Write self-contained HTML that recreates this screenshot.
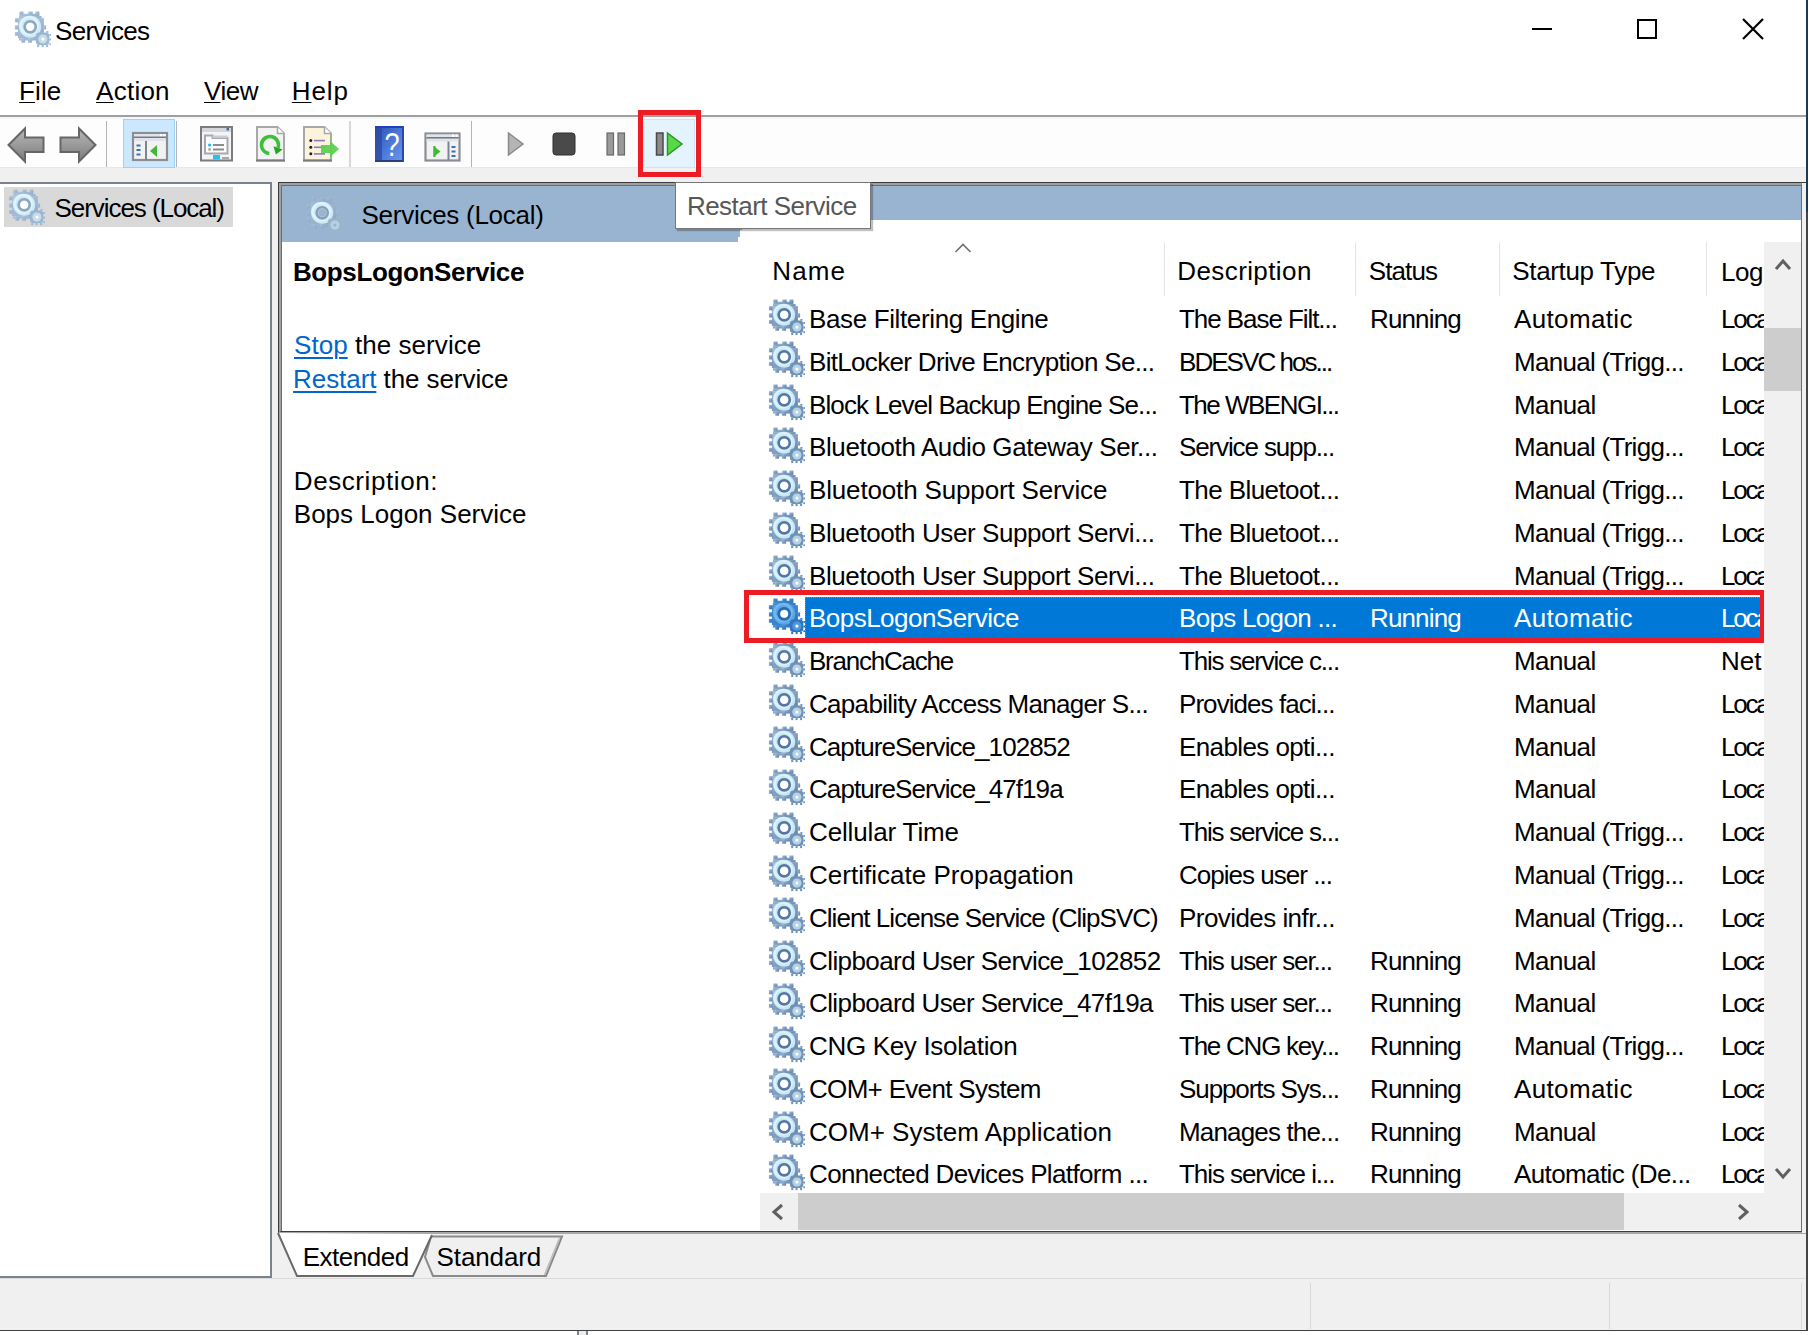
<!DOCTYPE html>
<html><head><meta charset="utf-8">
<style>
*{box-sizing:border-box;margin:0;padding:0}
html,body{width:1809px;height:1335px;overflow:hidden;background:#fff}
body{position:relative;font-family:"Liberation Sans",sans-serif;font-size:26px;letter-spacing:-0.45px;color:#000}
.a{position:absolute}
.t{position:absolute;white-space:nowrap;line-height:30px}
u{text-decoration-thickness:1px;text-underline-offset:2px}
svg.g{position:absolute}
.row{position:absolute;left:759px;width:1005px;height:42.77px}
.row .c{position:absolute;top:0;line-height:42.77px;white-space:nowrap}
.row.sel .c{color:#fff}
.lnk{color:#0066cc;text-decoration:underline;text-decoration-thickness:1.6px;text-underline-offset:3px}
.selbg{position:absolute;left:46px;top:-0.5px;width:959px;height:42px;background:#0078d7;border:1px dotted #a08060}
</style></head><body>
<svg width="0" height="0" style="position:absolute">
<defs>
<radialGradient id="rg" cx="0.45" cy="0.45" r="0.6"><stop offset="0" stop-color="#e8f6fc"/><stop offset="0.6" stop-color="#bfe0f0"/><stop offset="1" stop-color="#7f9fc2"/></radialGradient>
<radialGradient id="rs" cx="0.45" cy="0.45" r="0.6"><stop offset="0" stop-color="#d0e6f2"/><stop offset="1" stop-color="#7d9cc0"/></radialGradient>
<symbol id="gear" viewBox="0 0 37 37"><g opacity="1">
<linearGradient id="gear_t" x1="0" y1="0" x2="1" y2="1"><stop offset="0" stop-color="#a4c0dc"/><stop offset="1" stop-color="#5f7ea6"/></linearGradient>
<g fill="url(#gear_t)"><rect x="5.40" y="2.70" width="20" height="2.6"/><rect x="5.40" y="0.50" width="4.1" height="3"/><rect x="14.30" y="0.50" width="4.4" height="3"/><rect x="21.30" y="0.50" width="4.1" height="3"/><rect x="4.90" y="5.00" width="22.7" height="2.6"/><rect x="3.90" y="7.20" width="26" height="19.8"/><rect x="0.90" y="7.20" width="3.5" height="4.1"/><rect x="0.90" y="14.30" width="3.5" height="4.2"/><rect x="0.90" y="20.90" width="3.5" height="3.8"/><rect x="29.90" y="14.30" width="2.2" height="4.2"/><rect x="4.90" y="26.90" width="18" height="2.6"/><rect x="7.30" y="26.90" width="3.8" height="4.8"/><rect x="13.90" y="26.90" width="4.2" height="4.8"/></g>
<circle cx="16.2" cy="15.8" r="11" fill="#c6e7f5"/>
<circle cx="15.0" cy="14.600000000000001" r="8.6" fill="none" stroke="#e4f6fc" stroke-width="2.6" opacity="0.7"/>
<circle cx="16.2" cy="15.8" r="5.6" fill="none" stroke="#5676a4" stroke-width="2.6"/>
<circle cx="16.2" cy="15.8" r="3.9" fill="#fff"/>
<g fill="#7092b8"><rect x="21.90" y="21.50" width="13.4" height="12.6" rx="3.5"/><rect x="35.30" y="23.10" width="1.8" height="1.8"/><rect x="35.30" y="27.50" width="1.8" height="2"/><rect x="35.30" y="32.30" width="1.8" height="1.8"/><rect x="23.20" y="33.90" width="2" height="2.2"/><rect x="27.60" y="33.90" width="2" height="2.2"/><rect x="32.10" y="33.90" width="2" height="2.2"/><rect x="32.40" y="20.00" width="2" height="1.8"/></g>
<circle cx="28.9" cy="28.1" r="4.6" fill="#b4d2e4"/>
<circle cx="28.9" cy="28.1" r="1.6" fill="#fff"/>
</g></symbol><symbol id="gsel" viewBox="0 0 37 37"><g opacity="1">
<linearGradient id="gsel_t" x1="0" y1="0" x2="1" y2="1"><stop offset="0" stop-color="#4d9be0"/><stop offset="1" stop-color="#2a6cb8"/></linearGradient>
<g fill="url(#gsel_t)"><rect x="5.40" y="2.70" width="20" height="2.6"/><rect x="5.40" y="0.50" width="4.1" height="3"/><rect x="14.30" y="0.50" width="4.4" height="3"/><rect x="21.30" y="0.50" width="4.1" height="3"/><rect x="4.90" y="5.00" width="22.7" height="2.6"/><rect x="3.90" y="7.20" width="26" height="19.8"/><rect x="0.90" y="7.20" width="3.5" height="4.1"/><rect x="0.90" y="14.30" width="3.5" height="4.2"/><rect x="0.90" y="20.90" width="3.5" height="3.8"/><rect x="29.90" y="14.30" width="2.2" height="4.2"/><rect x="4.90" y="26.90" width="18" height="2.6"/><rect x="7.30" y="26.90" width="3.8" height="4.8"/><rect x="13.90" y="26.90" width="4.2" height="4.8"/></g>
<circle cx="16.2" cy="15.8" r="11" fill="#5aa6e6"/>
<circle cx="15.0" cy="14.600000000000001" r="8.6" fill="none" stroke="#7cc0f0" stroke-width="2.6" opacity="0.7"/>
<circle cx="16.2" cy="15.8" r="5.6" fill="none" stroke="#2a6ab4" stroke-width="2.6"/>
<circle cx="16.2" cy="15.8" r="3.9" fill="#fff"/>
<g fill="#2f74c0"><rect x="21.90" y="21.50" width="13.4" height="12.6" rx="3.5"/><rect x="35.30" y="23.10" width="1.8" height="1.8"/><rect x="35.30" y="27.50" width="1.8" height="2"/><rect x="35.30" y="32.30" width="1.8" height="1.8"/><rect x="23.20" y="33.90" width="2" height="2.2"/><rect x="27.60" y="33.90" width="2" height="2.2"/><rect x="32.10" y="33.90" width="2" height="2.2"/><rect x="32.40" y="20.00" width="2" height="1.8"/></g>
<circle cx="28.9" cy="28.1" r="4.6" fill="#4f98dc"/>
<circle cx="28.9" cy="28.1" r="1.6" fill="#fff"/>
</g></symbol><symbol id="ghdr" viewBox="0 0 37 37"><g opacity="1">
<linearGradient id="ghdr_t" x1="0" y1="0" x2="1" y2="1"><stop offset="0" stop-color="#a8c0d8"/><stop offset="1" stop-color="#8aa6c4"/></linearGradient>
<g fill="url(#ghdr_t)"><rect x="5.40" y="2.70" width="20" height="2.6"/><rect x="5.40" y="0.50" width="4.1" height="3"/><rect x="14.30" y="0.50" width="4.4" height="3"/><rect x="21.30" y="0.50" width="4.1" height="3"/><rect x="4.90" y="5.00" width="22.7" height="2.6"/><rect x="3.90" y="7.20" width="26" height="19.8"/><rect x="0.90" y="7.20" width="3.5" height="4.1"/><rect x="0.90" y="14.30" width="3.5" height="4.2"/><rect x="0.90" y="20.90" width="3.5" height="3.8"/><rect x="29.90" y="14.30" width="2.2" height="4.2"/><rect x="4.90" y="26.90" width="18" height="2.6"/><rect x="7.30" y="26.90" width="3.8" height="4.8"/><rect x="13.90" y="26.90" width="4.2" height="4.8"/></g>
<circle cx="16.2" cy="15.8" r="11" fill="#cdeaf6"/>
<circle cx="15.0" cy="14.600000000000001" r="8.6" fill="none" stroke="#e6f7fd" stroke-width="2.6" opacity="0.7"/>
<circle cx="16.2" cy="15.8" r="5.6" fill="none" stroke="#8aa0b8" stroke-width="2.6"/>
<circle cx="16.2" cy="15.8" r="3.9" fill="#99b4d1"/>
<g fill="#9ab4cc"><rect x="21.90" y="21.50" width="13.4" height="12.6" rx="3.5"/><rect x="35.30" y="23.10" width="1.8" height="1.8"/><rect x="35.30" y="27.50" width="1.8" height="2"/><rect x="35.30" y="32.30" width="1.8" height="1.8"/><rect x="23.20" y="33.90" width="2" height="2.2"/><rect x="27.60" y="33.90" width="2" height="2.2"/><rect x="32.10" y="33.90" width="2" height="2.2"/><rect x="32.40" y="20.00" width="2" height="1.8"/></g>
<circle cx="28.9" cy="28.1" r="4.6" fill="#b8d0e2"/>
<circle cx="28.9" cy="28.1" r="1.6" fill="#99b4d1"/>
</g></symbol><symbol id="gfade" viewBox="0 0 37 37"><g opacity="1">
<linearGradient id="gfade_t" x1="0" y1="0" x2="1" y2="1"><stop offset="0" stop-color="#b4cce2"/><stop offset="1" stop-color="#8eaac8"/></linearGradient>
<g fill="url(#gfade_t)"><rect x="5.40" y="2.70" width="20" height="2.6"/><rect x="5.40" y="0.50" width="4.1" height="3"/><rect x="14.30" y="0.50" width="4.4" height="3"/><rect x="21.30" y="0.50" width="4.1" height="3"/><rect x="4.90" y="5.00" width="22.7" height="2.6"/><rect x="3.90" y="7.20" width="26" height="19.8"/><rect x="0.90" y="7.20" width="3.5" height="4.1"/><rect x="0.90" y="14.30" width="3.5" height="4.2"/><rect x="0.90" y="20.90" width="3.5" height="3.8"/><rect x="29.90" y="14.30" width="2.2" height="4.2"/><rect x="4.90" y="26.90" width="18" height="2.6"/><rect x="7.30" y="26.90" width="3.8" height="4.8"/><rect x="13.90" y="26.90" width="4.2" height="4.8"/></g>
<circle cx="16.2" cy="15.8" r="11" fill="#cfeaf6"/>
<circle cx="15.0" cy="14.600000000000001" r="8.6" fill="none" stroke="#e8f8fd" stroke-width="2.6" opacity="0.7"/>
<circle cx="16.2" cy="15.8" r="5.6" fill="none" stroke="#8ea6c0" stroke-width="2.6"/>
<circle cx="16.2" cy="15.8" r="3.9" fill="#fff"/>
<g fill="#9ab6d0"><rect x="21.90" y="21.50" width="13.4" height="12.6" rx="3.5"/><rect x="35.30" y="23.10" width="1.8" height="1.8"/><rect x="35.30" y="27.50" width="1.8" height="2"/><rect x="35.30" y="32.30" width="1.8" height="1.8"/><rect x="23.20" y="33.90" width="2" height="2.2"/><rect x="27.60" y="33.90" width="2" height="2.2"/><rect x="32.10" y="33.90" width="2" height="2.2"/><rect x="32.40" y="20.00" width="2" height="1.8"/></g>
<circle cx="28.9" cy="28.1" r="4.6" fill="#c8dcea"/>
<circle cx="28.9" cy="28.1" r="1.6" fill="#fff"/>
</g></symbol>
</defs></svg>

<!-- title bar -->
<svg class="g" style="left:14px;top:11px" width="37" height="37" viewBox="0 0 37 37"><use href="#gfade"/></svg>
<div class="t" id="title" style="left:55.00px;top:16.25px;letter-spacing:-0.657px;">Services</div>
<div class="a" style="left:1532px;top:28px;width:20px;height:2px;background:#000"></div>
<div class="a" style="left:1637px;top:19px;width:20px;height:20px;border:2px solid #000"></div>
<svg class="a" style="left:1742px;top:18px" width="22" height="22" viewBox="0 0 22 22"><path d="M1 1L21 21M21 1L1 21" stroke="#000" stroke-width="2.2"/></svg>
<div class="a" style="left:1806px;top:0;width:2px;height:212px;background:#1b3a57"></div>
<div class="a" style="left:1806px;top:212px;width:2px;height:1119px;background:#454545"></div>

<!-- menu -->
<div class="t" id="file" style="left:19.10px;top:76.00px;letter-spacing:0.100px;"><u>F</u>ile</div>
<div class="t" id="action" style="left:96.10px;top:76.00px;letter-spacing:0.240px;"><u>A</u>ction</div>
<div class="t" id="view" style="left:204.00px;top:76.00px;letter-spacing:-0.467px;"><u>V</u>iew</div>
<div class="t" id="help" style="left:291.80px;top:76.00px;letter-spacing:0.867px;"><u>H</u>elp</div>
<div class="a" style="left:0;top:115px;width:1806px;height:2px;background:#a0a0a0"></div>

<!-- toolbar -->
<div class="a" style="left:0;top:117px;width:1806px;height:51px;background:#fdfdfd;border-top:2px solid #f3f7fc;border-bottom:1px solid #e8e8e8"></div>
<div class="a" style="left:0;top:168px;width:1806px;height:14px;background:#f0f0f0"></div>

<!-- toolbar icons -->
<svg class="a" style="left:0;top:117px" width="720" height="51" viewBox="0 117 720 51">
<defs>
<linearGradient id="arr" x1="0" y1="0" x2="0" y2="1"><stop offset="0" stop-color="#b8b8b8"/><stop offset="0.5" stop-color="#9a9a9a"/><stop offset="1" stop-color="#7a7a7a"/></linearGradient>
<linearGradient id="hb" x1="0" y1="0" x2="1" y2="1"><stop offset="0" stop-color="#2a4eb0"/><stop offset="0.5" stop-color="#4a78d8"/><stop offset="1" stop-color="#6a98f0"/></linearGradient>
</defs>
<path d="M8.5,145 L25,128.5 L25,137.5 L43.5,137.5 L43.5,152 L25,152 L25,161.5 Z" fill="url(#arr)" stroke="#666" stroke-width="2"/>
<path d="M95.5,145 L79,128.5 L79,137.5 L60.5,137.5 L60.5,152 L79,152 L79,161.5 Z" fill="url(#arr)" stroke="#666" stroke-width="2"/>
<rect x="106" y="121" width="1" height="46" fill="#b4b4b4"/>
<rect x="123.5" y="119.5" width="51" height="48" fill="#cce8ff" stroke="#99d1ff" stroke-width="1"/>
<rect x="176" y="121" width="1" height="46" fill="#b4b4b4"/>
<!-- console tree icon -->
<rect x="133" y="133" width="34" height="27" fill="#f2f2f2" stroke="#8a8e94" stroke-width="2.2"/>
<rect x="134" y="134" width="32" height="2.5" fill="#dfe4ea"/><rect x="160" y="134" width="2" height="2.5" fill="#fff"/><rect x="163.5" y="134" width="2" height="2.5" fill="#fff"/>
<rect x="134" y="136.5" width="32" height="1.6" fill="#6e7a8a"/>
<rect x="134" y="138.5" width="32" height="2.5" fill="#dfe4ea"/>
<rect x="145" y="141" width="2" height="19" fill="#7a8696"/>
<rect x="136.5" y="144.5" width="4" height="2" fill="#3a70c0"/><rect x="136.5" y="149" width="4" height="2" fill="#3a70c0"/><rect x="136.5" y="153.5" width="4" height="2" fill="#3a70c0"/>
<path d="M150,151 L157,145 L157,157 Z" fill="#40b838"/>
<!-- properties icon -->
<rect x="201" y="127" width="31" height="33.5" fill="#f4f4f4" stroke="#7c7c7c" stroke-width="2"/>
<rect x="202" y="128" width="29" height="4" fill="#d4d6da"/>
<rect x="226.5" y="128" width="2.5" height="2.5" fill="#4a6a9a"/>
<path d="M205,135.5 L212.5,135.5 L212.5,138 L227.5,138 L227.5,153.5 L205,153.5 Z" fill="#fcfcfc" stroke="#a4a8b0" stroke-width="2"/>
<rect x="212.5" y="135.5" width="15" height="2.5" fill="#c8ccd4"/>
<circle cx="209.6" cy="145" r="1.6" fill="#20b8f8"/><rect x="213" y="144" width="11" height="2" fill="#8c8c8c"/>
<circle cx="209.6" cy="149.5" r="1.4" fill="#a8a8a8"/><rect x="213" y="148.5" width="11" height="2" fill="#8c8c8c"/>
<rect x="213" y="155" width="7" height="4.5" fill="#28c0f0"/><rect x="222" y="157" width="7" height="2.5" fill="#a8a8a8"/>
<!-- refresh icon -->
<path d="M257,127 L277.5,127 L284,133.5 L284,160.5 L257,160.5 Z" fill="#f3f3f3" stroke="#a8a8a8" stroke-width="2"/>
<rect x="256" y="159.5" width="29" height="2" fill="#7a7a7a"/>
<path d="M277.5,127 L277.5,133.5 L284,133.5" fill="#fff" stroke="#a8a8a8" stroke-width="1.5"/>
<path d="M269.3,153.5 A8.5,8.5 0 1 1 278,147.9" fill="none" stroke="#3cc03a" stroke-width="3.6"/>
<path d="M282.6,149.6 L273.4,146.2 L275.9,154.5 Z" fill="#22a822"/>
<!-- export icon -->
<path d="M304,127 L324.5,127 L331,133.5 L331,160.5 L304,160.5 Z" fill="#fbf3dc" stroke="#a8a8a8" stroke-width="2"/>
<rect x="303" y="159.5" width="29" height="2" fill="#7a7a7a"/>
<path d="M324.5,127 L324.5,133.5 L331,133.5" fill="#fff" stroke="#a8a8a8" stroke-width="1.5"/>
<circle cx="310.8" cy="140.5" r="1.5" fill="#222"/><rect x="314" y="139.8" width="11" height="1.6" fill="#8a7cb8"/>
<circle cx="310.8" cy="147.2" r="1.5" fill="#222"/><rect x="314" y="146.5" width="11" height="1.6" fill="#8a7cb8"/>
<circle cx="310.8" cy="153.8" r="1.5" fill="#222"/><rect x="314" y="153.1" width="11" height="1.6" fill="#8a7cb8"/>
<path d="M321,145 L330,145 L330,141 L339,149 L330,157 L330,153 L321,153 Z" fill="#5cd050" opacity="0.95"/>
<rect x="349.5" y="121" width="1" height="46" fill="#b4b4b4"/>
<!-- help icon -->
<rect x="375" y="126" width="29" height="36" fill="url(#hb)"/>
<rect x="375" y="126" width="7" height="36" fill="#2a4aa0" opacity="0.75"/>
<rect x="375" y="126" width="29" height="2" fill="#2040c0"/>
<rect x="375" y="160" width="29" height="2" fill="#303e70"/>
<rect x="402" y="126" width="2" height="36" fill="#3048a0"/>
<text x="392" y="156.5" font-family="Liberation Sans" font-size="34" fill="#fff" text-anchor="middle" letter-spacing="0" transform="translate(392 0) scale(0.8 1) translate(-392 0)">?</text>
<!-- action pane icon -->
<rect x="425.5" y="133.5" width="34" height="27" fill="#f2f2f2" stroke="#8a8e94" stroke-width="2.2"/>
<rect x="426.5" y="134.5" width="32" height="2.5" fill="#dfe4ea"/><rect x="452" y="134.5" width="2" height="2.5" fill="#fff"/><rect x="455.5" y="134.5" width="2" height="2.5" fill="#fff"/>
<rect x="426.5" y="137" width="32" height="1.6" fill="#6e7a8a"/>
<rect x="426.5" y="139" width="32" height="2.5" fill="#dfe4ea"/>
<rect x="447.5" y="141.5" width="2" height="19" fill="#7a8696"/>
<rect x="451.5" y="146" width="4" height="2" fill="#3a70c0"/><rect x="451.5" y="150.5" width="4" height="2" fill="#3a70c0"/><rect x="451.5" y="155" width="4" height="2" fill="#3a70c0"/>
<path d="M433.5,146 L440.5,151.5 L433.5,157 Z" fill="#40b838"/>
<rect x="433.5" y="146" width="2" height="11" fill="#40b838"/>
<rect x="471" y="121" width="1" height="46" fill="#b4b4b4"/>
<!-- play/stop/pause -->
<path d="M508.5,133 L523,144 L508.5,155 Z" fill="#b4b4b4" stroke="#8a8a8a" stroke-width="1.5"/>
<rect x="553" y="133" width="22" height="22" rx="3" fill="#4a4a4a" stroke="#2e2e2e" stroke-width="1"/>
<rect x="607" y="133" width="6.5" height="22" fill="#9a9a9a" stroke="#6a6a6a" stroke-width="1.2"/>
<rect x="618" y="133" width="6.5" height="22" fill="#9a9a9a" stroke="#6a6a6a" stroke-width="1.2"/>
<!-- restart highlighted -->
<rect x="643.5" y="119.5" width="51" height="48" fill="#e5f3ff" stroke="#cce4f7" stroke-width="1"/>
<rect x="656.5" y="133" width="6.5" height="22" fill="#8a8a8a" stroke="#4a4a4a" stroke-width="1.5"/>
<path d="M667.5,133 L682,144 L667.5,155 Z" fill="#5ad84a" stroke="#2a9a1e" stroke-width="1.5"/>
</svg>
<!-- red box toolbar -->


<div class="a" style="left:0;top:168px;width:1806px;height:1162px;background:#f0f0f0"></div>
<!-- left tree panel -->
<div class="a" style="left:-2px;top:182px;width:274px;height:1096px;border:2px solid #7a8290;background:#fff"></div>
<div class="a" style="left:4px;top:187px;width:229px;height:40px;background:#d9d9d9"></div>
<svg class="g" style="left:8px;top:189px" width="37" height="37" viewBox="0 0 37 37"><use href="#gfade"/></svg>
<div class="t" id="tree" style="left:54.60px;top:192.95px;letter-spacing:-1.067px;">Services (Local)</div>

<!-- right panel -->
<div class="a" style="left:278px;top:182px;width:1528px;height:1052px;background:#fff;border-top:1px solid #3c3c3c;border-left:1px solid #3c3c3c;border-bottom:2px solid #a8a8a8"></div>
<div class="a" style="left:279px;top:183px;width:1523px;height:1049px;border-top:2px solid #a0a0a0;border-left:2px solid #a0a0a0;border-right:1px solid #6d6d6d;border-bottom:1px solid #3c3c3c"></div>
<div class="a" style="left:281px;top:185px;width:1521px;height:1px;background:#6d6d6d"></div>
<div class="a" style="left:281px;top:185px;width:1px;height:1046px;background:#6d6d6d"></div>
<div class="a" style="left:1802px;top:183px;width:4px;height:1050px;background:#f0f0f0"></div>
<div class="a" style="left:282px;top:186px;width:456px;height:56px;background:#99b4d1"></div>
<div class="a" style="left:738px;top:186px;width:1063px;height:34px;background:#99b4d1"></div>
<svg class="g" style="left:306px;top:197px" width="37" height="37" viewBox="0 0 37 37"><use href="#ghdr"/></svg>
<div class="t" id="hdr" style="left:361.50px;top:199.90px;letter-spacing:-0.267px;">Services (Local)</div>

<div class="a" style="left:738px;top:220px;width:2px;height:17px;background:#99b4d1"></div>
<div class="a" style="left:740px;top:220px;width:2px;height:10px;background:#99b4d1"></div>
<!-- tooltip -->
<div class="a" style="left:675px;top:182px;width:196px;height:47px;background:#fff;border:1px solid #767676;box-shadow:2px 2px 1px rgba(0,0,0,0.25)"></div>
<div class="t" id="tip" style="left:686.90px;top:191.00px;letter-spacing:-0.529px;color:#575757;">Restart Service</div>

<!-- description pane -->
<div class="t" id="bold" style="left:292.90px;top:256.75px;letter-spacing:-0.360px;font-weight:bold;">BopsLogonService</div>
<div class="t" id="stop" style="left:294.00px;top:330.05px;letter-spacing:0.053px;"><span class="lnk">Stop</span> the service</div>
<div class="t" id="restart" style="left:293.10px;top:364.05px;letter-spacing:-0.077px;"><span class="lnk">Restart</span> the service</div>
<div class="t" id="desc" style="left:293.80px;top:465.65px;letter-spacing:0.582px;">Description:</div>
<div class="t" id="bops" style="left:293.80px;top:499.05px;letter-spacing:-0.000px;">Bops Logon Service</div>

<!-- list header -->
<div class="t" id="name" style="left:772.30px;top:256.35px;letter-spacing:1.133px;">Name</div>
<svg class="a" style="left:954px;top:242px" width="18" height="12" viewBox="0 0 18 12"><path d="M1.5,10 L9,2.5 L16.5,10" fill="none" stroke="#707070" stroke-width="1.6"/></svg>
<div class="a" style="left:1164px;top:242px;width:1px;height:54px;background:#e5e5e5"></div>
<div class="t" id="hdesc" style="left:1177.30px;top:256.35px;letter-spacing:0.400px;">Description</div>
<div class="a" style="left:1355px;top:242px;width:1px;height:54px;background:#e5e5e5"></div>
<div class="t" id="hstatus" style="left:1368.70px;top:256.35px;letter-spacing:-0.880px;">Status</div>
<div class="a" style="left:1499px;top:242px;width:1px;height:54px;background:#e5e5e5"></div>
<div class="t" id="hstartup" style="left:1512.30px;top:256.35px;letter-spacing:-0.345px;">Startup Type</div>
<div class="a" style="left:1706px;top:242px;width:1px;height:54px;background:#e5e5e5"></div>
<div class="a" style="left:1721px;top:242px;width:43px;height:54px;overflow:hidden"><div class="t" style="left:0;top:15px">Log On As</div></div>

<!-- rows -->
<div class="a" style="left:0;top:0;width:1764px;height:1193px;overflow:hidden">
<div class="row" style="top:298.00px"><svg class="g" style="left:9px;top:0.6px" width="37" height="37" viewBox="0 0 37 37"><use href="#gear"/></svg><span class="c" style="left:50px;letter-spacing:-0.367px">Base Filtering Engine</span><span class="c" style="left:420px;letter-spacing:-1.063px">The Base Filt...</span><span class="c" style="left:611px;letter-spacing:-0.860px">Running</span><span class="c" style="left:755px;letter-spacing:0.361px">Automatic</span><span class="c" style="left:962px;letter-spacing:-2.200px">Local System</span></div><div class="row" style="top:340.77px"><svg class="g" style="left:9px;top:0.6px" width="37" height="37" viewBox="0 0 37 37"><use href="#gear"/></svg><span class="c" style="left:50px;letter-spacing:-0.679px">BitLocker Drive Encryption Se...</span><span class="c" style="left:420px;letter-spacing:-1.953px">BDESVC hos...</span><span class="c" style="left:611px;letter-spacing:-0.450px"></span><span class="c" style="left:755px;letter-spacing:-0.714px">Manual (Trigg...</span><span class="c" style="left:962px;letter-spacing:-2.200px">Local System</span></div><div class="row" style="top:383.54px"><svg class="g" style="left:9px;top:0.6px" width="37" height="37" viewBox="0 0 37 37"><use href="#gear"/></svg><span class="c" style="left:50px;letter-spacing:-0.893px">Block Level Backup Engine Se...</span><span class="c" style="left:420px;letter-spacing:-1.513px">The WBENGI...</span><span class="c" style="left:611px;letter-spacing:-0.450px"></span><span class="c" style="left:755px;letter-spacing:-0.616px">Manual</span><span class="c" style="left:962px;letter-spacing:-2.200px">Local System</span></div><div class="row" style="top:426.31px"><svg class="g" style="left:9px;top:0.6px" width="37" height="37" viewBox="0 0 37 37"><use href="#gear"/></svg><span class="c" style="left:50px;letter-spacing:-0.376px">Bluetooth Audio Gateway Ser...</span><span class="c" style="left:420px;letter-spacing:-1.127px">Service supp...</span><span class="c" style="left:611px;letter-spacing:-0.450px"></span><span class="c" style="left:755px;letter-spacing:-0.714px">Manual (Trigg...</span><span class="c" style="left:962px;letter-spacing:-2.200px">Local Service</span></div><div class="row" style="top:469.08px"><svg class="g" style="left:9px;top:0.6px" width="37" height="37" viewBox="0 0 37 37"><use href="#gear"/></svg><span class="c" style="left:50px;letter-spacing:-0.153px">Bluetooth Support Service</span><span class="c" style="left:420px;letter-spacing:-0.579px">The Bluetoot...</span><span class="c" style="left:611px;letter-spacing:-0.450px"></span><span class="c" style="left:755px;letter-spacing:-0.714px">Manual (Trigg...</span><span class="c" style="left:962px;letter-spacing:-2.200px">Local Service</span></div><div class="row" style="top:511.85px"><svg class="g" style="left:9px;top:0.6px" width="37" height="37" viewBox="0 0 37 37"><use href="#gear"/></svg><span class="c" style="left:50px;letter-spacing:-0.414px">Bluetooth User Support Servi...</span><span class="c" style="left:420px;letter-spacing:-0.579px">The Bluetoot...</span><span class="c" style="left:611px;letter-spacing:-0.450px"></span><span class="c" style="left:755px;letter-spacing:-0.714px">Manual (Trigg...</span><span class="c" style="left:962px;letter-spacing:-2.200px">Local System</span></div><div class="row" style="top:554.62px"><svg class="g" style="left:9px;top:0.6px" width="37" height="37" viewBox="0 0 37 37"><use href="#gear"/></svg><span class="c" style="left:50px;letter-spacing:-0.414px">Bluetooth User Support Servi...</span><span class="c" style="left:420px;letter-spacing:-0.579px">The Bluetoot...</span><span class="c" style="left:611px;letter-spacing:-0.450px"></span><span class="c" style="left:755px;letter-spacing:-0.714px">Manual (Trigg...</span><span class="c" style="left:962px;letter-spacing:-2.200px">Local System</span></div><div class="row sel" style="top:597.39px"><div class="selbg"></div><svg class="g" style="left:9px;top:0.6px" width="37" height="37" viewBox="0 0 37 37"><use href="#gsel"/></svg><span class="c" style="left:50px;letter-spacing:-0.524px">BopsLogonService</span><span class="c" style="left:420px;letter-spacing:-0.684px">Bops Logon ...</span><span class="c" style="left:611px;letter-spacing:-0.860px">Running</span><span class="c" style="left:755px;letter-spacing:0.361px">Automatic</span><span class="c" style="left:962px;letter-spacing:-2.200px">Local System</span></div><div class="row" style="top:640.16px"><svg class="g" style="left:9px;top:0.6px" width="37" height="37" viewBox="0 0 37 37"><use href="#gear"/></svg><span class="c" style="left:50px;letter-spacing:-1.235px">BranchCache</span><span class="c" style="left:420px;letter-spacing:-1.218px">This service c...</span><span class="c" style="left:611px;letter-spacing:-0.450px"></span><span class="c" style="left:755px;letter-spacing:-0.616px">Manual</span><span class="c" style="left:962px;letter-spacing:0.000px">Net</span></div><div class="row" style="top:682.93px"><svg class="g" style="left:9px;top:0.6px" width="37" height="37" viewBox="0 0 37 37"><use href="#gear"/></svg><span class="c" style="left:50px;letter-spacing:-0.691px">Capability Access Manager S...</span><span class="c" style="left:420px;letter-spacing:-0.941px">Provides faci...</span><span class="c" style="left:611px;letter-spacing:-0.450px"></span><span class="c" style="left:755px;letter-spacing:-0.616px">Manual</span><span class="c" style="left:962px;letter-spacing:-2.200px">Local System</span></div><div class="row" style="top:725.70px"><svg class="g" style="left:9px;top:0.6px" width="37" height="37" viewBox="0 0 37 37"><use href="#gear"/></svg><span class="c" style="left:50px;letter-spacing:-0.936px">CaptureService_102852</span><span class="c" style="left:420px;letter-spacing:-0.599px">Enables opti...</span><span class="c" style="left:611px;letter-spacing:-0.450px"></span><span class="c" style="left:755px;letter-spacing:-0.616px">Manual</span><span class="c" style="left:962px;letter-spacing:-2.200px">Local System</span></div><div class="row" style="top:768.47px"><svg class="g" style="left:9px;top:0.6px" width="37" height="37" viewBox="0 0 37 37"><use href="#gear"/></svg><span class="c" style="left:50px;letter-spacing:-0.929px">CaptureService_47f19a</span><span class="c" style="left:420px;letter-spacing:-0.599px">Enables opti...</span><span class="c" style="left:611px;letter-spacing:-0.450px"></span><span class="c" style="left:755px;letter-spacing:-0.616px">Manual</span><span class="c" style="left:962px;letter-spacing:-2.200px">Local System</span></div><div class="row" style="top:811.24px"><svg class="g" style="left:9px;top:0.6px" width="37" height="37" viewBox="0 0 37 37"><use href="#gear"/></svg><span class="c" style="left:50px;letter-spacing:-0.143px">Cellular Time</span><span class="c" style="left:420px;letter-spacing:-1.218px">This service s...</span><span class="c" style="left:611px;letter-spacing:-0.450px"></span><span class="c" style="left:755px;letter-spacing:-0.714px">Manual (Trigg...</span><span class="c" style="left:962px;letter-spacing:-2.200px">Local Service</span></div><div class="row" style="top:854.01px"><svg class="g" style="left:9px;top:0.6px" width="37" height="37" viewBox="0 0 37 37"><use href="#gear"/></svg><span class="c" style="left:50px;letter-spacing:0.014px">Certificate Propagation</span><span class="c" style="left:420px;letter-spacing:-0.974px">Copies user ...</span><span class="c" style="left:611px;letter-spacing:-0.450px"></span><span class="c" style="left:755px;letter-spacing:-0.714px">Manual (Trigg...</span><span class="c" style="left:962px;letter-spacing:-2.200px">Local System</span></div><div class="row" style="top:896.78px"><svg class="g" style="left:9px;top:0.6px" width="37" height="37" viewBox="0 0 37 37"><use href="#gear"/></svg><span class="c" style="left:50px;letter-spacing:-0.978px">Client License Service (ClipSVC)</span><span class="c" style="left:420px;letter-spacing:-0.556px">Provides infr...</span><span class="c" style="left:611px;letter-spacing:-0.450px"></span><span class="c" style="left:755px;letter-spacing:-0.714px">Manual (Trigg...</span><span class="c" style="left:962px;letter-spacing:-2.200px">Local System</span></div><div class="row" style="top:939.55px"><svg class="g" style="left:9px;top:0.6px" width="37" height="37" viewBox="0 0 37 37"><use href="#gear"/></svg><span class="c" style="left:50px;letter-spacing:-0.587px">Clipboard User Service_102852</span><span class="c" style="left:420px;letter-spacing:-1.100px">This user ser...</span><span class="c" style="left:611px;letter-spacing:-0.860px">Running</span><span class="c" style="left:755px;letter-spacing:-0.616px">Manual</span><span class="c" style="left:962px;letter-spacing:-2.200px">Local System</span></div><div class="row" style="top:982.32px"><svg class="g" style="left:9px;top:0.6px" width="37" height="37" viewBox="0 0 37 37"><use href="#gear"/></svg><span class="c" style="left:50px;letter-spacing:-0.600px">Clipboard User Service_47f19a</span><span class="c" style="left:420px;letter-spacing:-1.100px">This user ser...</span><span class="c" style="left:611px;letter-spacing:-0.860px">Running</span><span class="c" style="left:755px;letter-spacing:-0.616px">Manual</span><span class="c" style="left:962px;letter-spacing:-2.200px">Local System</span></div><div class="row" style="top:1025.09px"><svg class="g" style="left:9px;top:0.6px" width="37" height="37" viewBox="0 0 37 37"><use href="#gear"/></svg><span class="c" style="left:50px;letter-spacing:-0.323px">CNG Key Isolation</span><span class="c" style="left:420px;letter-spacing:-1.241px">The CNG key...</span><span class="c" style="left:611px;letter-spacing:-0.860px">Running</span><span class="c" style="left:755px;letter-spacing:-0.714px">Manual (Trigg...</span><span class="c" style="left:962px;letter-spacing:-2.200px">Local System</span></div><div class="row" style="top:1067.86px"><svg class="g" style="left:9px;top:0.6px" width="37" height="37" viewBox="0 0 37 37"><use href="#gear"/></svg><span class="c" style="left:50px;letter-spacing:-0.686px">COM+ Event System</span><span class="c" style="left:420px;letter-spacing:-1.087px">Supports Sys...</span><span class="c" style="left:611px;letter-spacing:-0.860px">Running</span><span class="c" style="left:755px;letter-spacing:0.361px">Automatic</span><span class="c" style="left:962px;letter-spacing:-2.200px">Local Service</span></div><div class="row" style="top:1110.63px"><svg class="g" style="left:9px;top:0.6px" width="37" height="37" viewBox="0 0 37 37"><use href="#gear"/></svg><span class="c" style="left:50px;letter-spacing:0.008px">COM+ System Application</span><span class="c" style="left:420px;letter-spacing:-0.838px">Manages the...</span><span class="c" style="left:611px;letter-spacing:-0.860px">Running</span><span class="c" style="left:755px;letter-spacing:-0.616px">Manual</span><span class="c" style="left:962px;letter-spacing:-2.200px">Local System</span></div><div class="row" style="top:1153.40px"><svg class="g" style="left:9px;top:0.6px" width="37" height="37" viewBox="0 0 37 37"><use href="#gear"/></svg><span class="c" style="left:50px;letter-spacing:-0.641px">Connected Devices Platform ...</span><span class="c" style="left:420px;letter-spacing:-1.061px">This service i...</span><span class="c" style="left:611px;letter-spacing:-0.860px">Running</span><span class="c" style="left:755px;letter-spacing:-0.607px">Automatic (De...</span><span class="c" style="left:962px;letter-spacing:-2.200px">Local Service</span></div>
</div>
<div class="a" style="left:744px;top:590px;width:1021px;height:53px;border:5px solid #ed1c24"></div>

<!-- scrollbars -->
<div class="a" style="left:1764px;top:242px;width:37px;height:988px;background:#f0f0f0"></div>
<div class="a" style="left:1764px;top:328px;width:37px;height:63px;background:#cdcdcd"></div>
<svg class="a" style="left:1774px;top:256px" width="18" height="16" viewBox="0 0 18 16"><path d="M2,13 L9,5 L16,13" fill="none" stroke="#606060" stroke-width="3"/></svg>
<svg class="a" style="left:1774px;top:1166px" width="18" height="16" viewBox="0 0 18 16"><path d="M2,3 L9,11 L16,3" fill="none" stroke="#606060" stroke-width="3"/></svg>
<div class="a" style="left:760px;top:1193px;width:1004px;height:37px;background:#f0f0f0"></div>
<div class="a" style="left:798px;top:1193px;width:826px;height:37px;background:#cdcdcd"></div>
<svg class="a" style="left:770px;top:1203px" width="16" height="18" viewBox="0 0 16 18"><path d="M12,2 L4,9 L12,16" fill="none" stroke="#606060" stroke-width="3"/></svg>
<svg class="a" style="left:1735px;top:1203px" width="16" height="18" viewBox="0 0 16 18"><path d="M4,2 L12,9 L4,16" fill="none" stroke="#606060" stroke-width="3"/></svg>

<!-- tabs -->
<div class="a" style="left:272px;top:1234px;width:1534px;height:44px;background:#f0f0f0"></div>
<svg class="a" style="left:270px;top:1230px" width="320" height="50" viewBox="270 1230 320 50">
<path d="M431,1236.5 L562,1236.5 L546,1276 L433,1276 L425,1257 Z" fill="#f0f0f0" stroke="#8a8a8a" stroke-width="2"/><path d="M559.5,1238 L544.5,1275" stroke="#bdbdbd" stroke-width="1.5"/>
<path d="M278,1233 L297,1276 L413,1276 L432,1234 Z" fill="#fff"/><path d="M278,1233 L297,1276 L413,1276 L432,1235" fill="none" stroke="#6a6a6a" stroke-width="2"/>

</svg>
<div class="t" id="ext" style="left:302.70px;top:1242.10px;letter-spacing:-0.486px;">Extended</div>
<div class="t" id="std" style="left:436.60px;top:1242.10px;letter-spacing:-0.114px;">Standard</div>

<!-- status bar -->
<div class="a" style="left:0;top:1278px;width:1806px;height:52px;background:#f0f0f0;border-top:1px solid #dadada"></div>
<div class="a" style="left:1310px;top:1283px;width:1px;height:46px;background:#d8d8d8"></div>
<div class="a" style="left:1609px;top:1283px;width:1px;height:46px;background:#d8d8d8"></div>
<div class="a" style="left:1801px;top:1283px;width:1px;height:46px;background:#d8d8d8"></div>
<div class="a" style="left:0;top:1330px;width:1808px;height:1px;background:#404040"></div>
<div class="a" style="left:577px;top:1331px;width:11px;height:4px;background:#eee;border-left:2px solid #7a8290;border-right:2px solid #7a8290"></div>
<div class="a" style="left:638px;top:110px;width:63px;height:67px;border:5px solid #ed1c24"></div>
</body></html>
